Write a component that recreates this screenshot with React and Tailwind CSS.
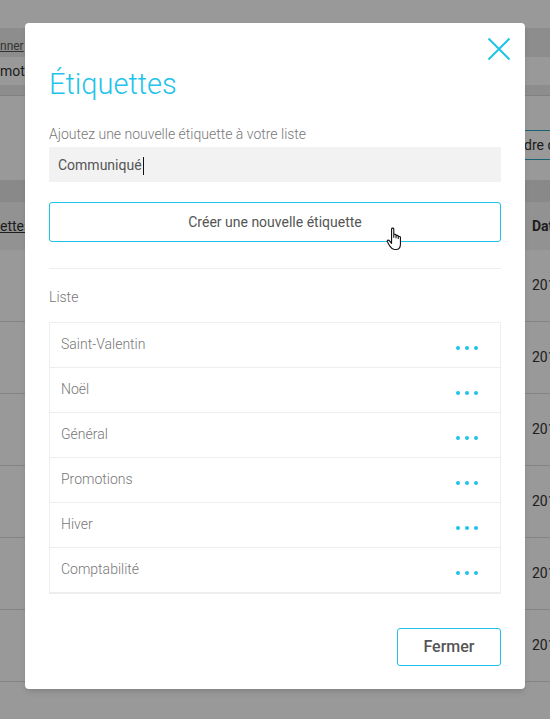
import { useState } from "react";

const tags = ["Saint-Valentin", "Noël", "Général", "Promotions", "Hiver", "Comptabilité"];

function Dots() {
    return (
        <div className="flex gap-[5px] pt-[12px]">
            <span className="w-[4px] h-[4px] rounded-full bg-[#1fc3ea]"></span>
            <span className="w-[4px] h-[4px] rounded-full bg-[#1fc3ea]"></span>
            <span className="w-[4px] h-[4px] rounded-full bg-[#1fc3ea]"></span>
        </div>
    );
}

function Hand() {
    return (
        <svg width="20" height="27" viewBox="0 0 18 24" className="absolute left-[337px] top-[24px]">
            <path
                d="M5 2.5 C5 1.5 7 1.5 7 2.5 L7 10 L7 8 C7 7 9 7 9 8 L9 10.5 L9 9 C9 8 11 8 11 9 L11 11 L11 10 C11 9 13 9 13 10 L13 16 C13 19 11.5 21 9 21 L7.5 21 C5.5 21 4.5 19.5 3.5 18 L1.2 14 C0.7 13 2 12 3 13 L5 15.5 Z"
                fill="#fff" stroke="#111" strokeWidth="1" strokeLinejoin="round"
            />
        </svg>
    );
}

function Background() {
    const rows = [0, 1, 2, 3, 4, 5];
    return (
        <div className="flex flex-col w-full h-full bg-white text-[14px] text-[#333] whitespace-nowrap">
            <div className="h-[28px]"></div>
            <div className="h-[68px] bg-[#ececec] border-b border-[#d8d8d8] flex flex-col">
                <div className="h-[29px] pt-[9px] text-[12px] text-[#555] underline">nner</div>
                <div className="h-[28px] bg-white flex items-center">motions</div>
            </div>
            <div className="h-[84px] flex items-start pt-[34px] pl-[522px]">
                <div className="border border-[#2aa5c2] rounded-[3px] pl-[1px] pr-3 h-[30px] flex items-center shrink-0">dre de tri</div>
            </div>
            <div className="h-[22px] bg-[#e4e4e4]"></div>
            <div className="h-[48px] bg-[#f4f4f4] flex items-center">
                <span className="underline w-[532px] shrink-0">ettes</span>
                <span className="font-bold shrink-0">Date</span>
            </div>
            {rows.map((r) => (
                <div key={r} className="h-[72px] border-b border-[#dcdcdc] flex items-center pl-[532px]">
                    <span className="shrink-0">2019</span>
                </div>
            ))}
        </div>
    );
}

function App() {
    const [value, setValue] = useState("Communiqué");

    return (
        <div className="relative w-[550px] h-[719px] overflow-hidden" style={{ fontFamily: "Roboto, 'Liberation Sans', sans-serif" }}>
            <Background />
            <div className="absolute inset-0 bg-black/40"></div>
            <div className="absolute left-[25px] top-[23px] w-[500px] h-[666px] bg-white rounded-[4px] shadow-md px-[24px]">
                <button className="absolute right-[14px] top-[14px] w-[24px] h-[24px]">
                    <svg width="24" height="24" viewBox="0 0 24 24">
                        <path d="M1.5 1.5 L22.5 22.5 M22.5 1.5 L1.5 22.5" stroke="#1fc3ea" strokeWidth="2" fill="none" />
                    </svg>
                </button>
                <h1 className="pt-[43px] text-[29px] leading-[36px] font-light text-[#1fc3ea]">Étiquettes</h1>

                <p className="mt-[23px] text-[14px] leading-[18px] text-[#777] font-light">Ajoutez une nouvelle étiquette à votre liste</p>
                <div className="mt-[4px] h-[35px] bg-[#f2f2f2] flex items-center px-[9px] pt-[2px] text-[14px] text-[#555]">
                    <input
                        value={value}
                        onChange={(e) => setValue(e.target.value)}
                        className="bg-transparent outline-none w-[86px]"
                    />
                    <span className="w-[1px] h-[18px] bg-[#111] -ml-[1px]"></span>
                </div>

                <div className="relative mt-[20px]">
                    <button className="w-full h-[40px] border border-[#1fc3ea] rounded-[3px] text-[14px] text-[#555]">
                        Créer une nouvelle étiquette
                    </button>
                    <Hand />
                </div>

                <div className="mt-[26px] border-t border-[#eee]"></div>
                <p className="mt-[19px] text-[14px] leading-[18px] text-[#777] font-light">Liste</p>

                <ul className="mt-[16px] border border-[#eee]">
                    {tags.map((t) => (
                        <li key={t} className="h-[45px] border-b border-[#eee] flex justify-between items-start pl-[11px] pr-[22px] pt-[11px] text-[14px] text-[#777] font-light">
                            <span>{t}</span>
                            <Dots />
                        </li>
                    ))}
                </ul>

                <div className="flex justify-end mt-[34px]">
                    <button className="w-[104px] h-[38px] border border-[#1fc3ea] rounded-[3px] text-[16px] font-medium text-[#555]">
                        Fermer
                    </button>
                </div>
            </div>
        </div>
    );
}

export default App;
